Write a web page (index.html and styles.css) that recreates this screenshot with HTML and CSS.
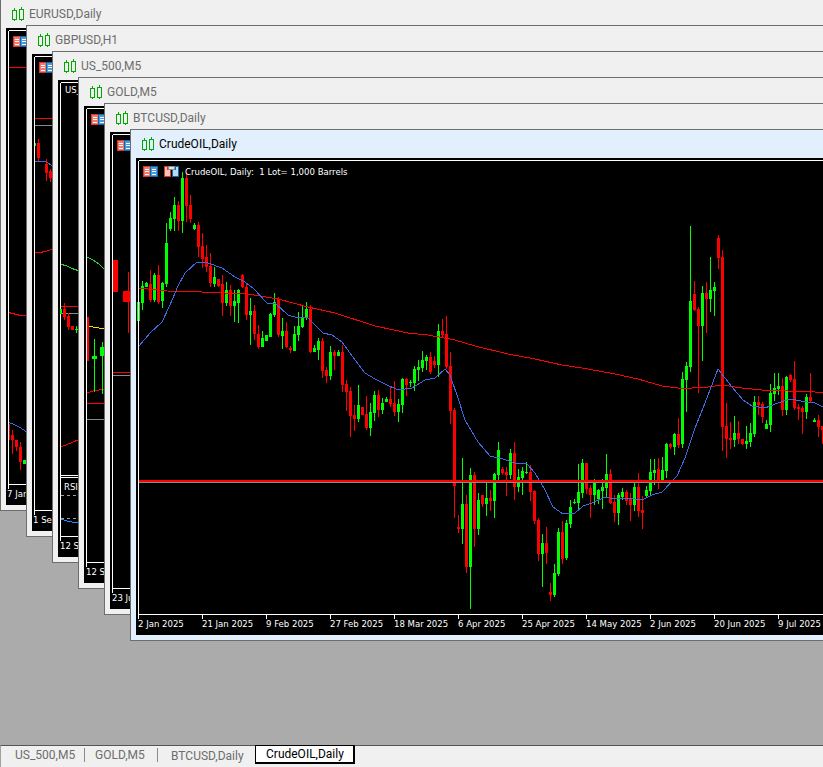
FILE: index.html
```html
<!DOCTYPE html>
<html lang="en">
<head>
<meta charset="utf-8">
<title>MetaTrader charts</title>
<link rel="stylesheet" href="styles.css">
</head>
<body>
<svg class="defs" aria-hidden="true">
  <symbol id="i-candle" viewBox="0 0 12 14">
    <path class="ic-g" d="M.5 3.5h4v9h-4zM2.5 1v2.5M2.5 12.5V14M7.5 2.5h4v10h-4zM9.5 0v2.5M9.5 12.5V14"/>
  </symbol>
  <symbol id="i-table" viewBox="0 0 15 11">
    <path class="ic-rf" d="M.5.5h7v10h-7z"/>
    <path class="ic-bf" d="M7.5.5h7v10h-7z"/>
    <path class="ic-w" d="M2 3h4M2 5.5h4M2 8h4M9 3h4M9 5.5h4M9 8h4"/>
  </symbol>
  <symbol id="i-save" viewBox="0 0 15 11">
    <path class="ic-rl" d="M.5.5h3v3h3v7h-6z"/>
    <path class="ic-bl" d="M11.5.5h3v10h-6v-7h3z"/>
    <path class="ic-gy" d="M4.5.5h6v3h-6z"/>
  </symbol>
</svg>
<main class="desk">

  <section class="win w1">
    <header class="title"><svg class="cicon"><use href="#i-candle"/></svg><span>EURUSD,Daily</span></header>
    <div class="chart">
      <svg class="plot" viewBox="6 28 830 477">
        <path class="ax" d="M8 30H900M8 30V488M8 484H900"/>
        <use href="#i-table" x="13" y="36" width="15" height="11"/>
        <path class="ln-r" d="M9 67.5H26M9 312.5l3 1 5 1 3 1 6 0"/>
        <path class="ln-b" d="M9 422.5l5 2 6 3 6 4"/>
        <path class="r" d="M9 424h1v16H9zM11 435h3v5h-3zM12 430h1v5h-1zM12 440h1v14h-1zM16 440h1v11h-1zM15 440h3v7h-3zM19 447h3v15h-3zM20 442h1v28h-1z"/>
        <path class="g" d="M23 460h3v4h-3z"/>
        <text class="lb" x="7" y="497">7 Jan 2025</text>
      </svg>
    </div>
  </section>

  <section class="win w2">
    <header class="title"><svg class="cicon"><use href="#i-candle"/></svg><span>GBPUSD,H1</span></header>
    <div class="chart">
      <svg class="plot" viewBox="32 54 830 477">
        <path class="ax" d="M34 56H900M34 56V514M34 510H900"/>
        <use href="#i-table" x="39" y="62" width="15" height="11"/>
        <path class="ln-r" d="M35 118.5H52M35 252.5l5 0 5-1 7-2"/>
        <path class="ln-gy" d="M35 125.5H52"/>
        <path class="ln-b" d="M35 161.5h10l7 4"/>
        <path class="g" d="M35 143h1v3h-1z"/>
        <path class="r" d="M37 143h3v15h-3zM38 139h1v4h-1zM38 158h1v3h-1zM45 164h3v9h-3zM46 159h1v22h-1zM49 171h3v7h-3zM50 169h1v13h-1z"/>
        <text class="lb" x="33" y="523">1 Sep 2025</text>
      </svg>
    </div>
  </section>

  <section class="win w3">
    <header class="title"><svg class="cicon"><use href="#i-candle"/></svg><span>US_500,M5</span></header>
    <div class="chart">
      <svg class="plot" viewBox="58 80 830 477">
        <path class="ax" d="M60 82H900M60 82V540M60 536H900M60 475H900M60 477H900"/>
        <text class="lb" x="65" y="93">US_500</text>
        <path class="ln-g" d="M61 264.5l5 1 6 3 6 2"/>
        <path class="ln-r" d="M61 306.5H78M61 447l17-7"/>
        <path class="ln-gy" d="M61 313.5H78"/>
        <path class="g" d="M60 309h2v5h-2zM76 326h1v7h-1zM75 329h3v1h-3z"/>
        <path class="r" d="M63 309h3v8h-3zM64 303h1v17h-1zM67 316h3v11h-3zM68 313h1v17h-1zM71 326h3v4h-3z"/>
        <text class="lb" x="64" y="490">RSI</text>
        <path class="ln-dash" d="M61 495.5H78M61 518.5H78"/>
        <path class="ln-c" d="M61 519l6 2 5 1 6 0"/>
        <text class="lb" x="60" y="549">12 Sep 2025</text>
      </svg>
    </div>
  </section>

  <section class="win w4">
    <header class="title"><svg class="cicon"><use href="#i-candle"/></svg><span>GOLD,M5</span></header>
    <div class="chart">
      <svg class="plot" viewBox="84 106 830 477">
        <path class="ax" d="M86 108H900M86 108V566M86 562H900"/>
        <use href="#i-table" x="91" y="114" width="15" height="11"/>
        <path class="ln-g" d="M87 257l6 3 6 4 5 5"/>
        <path class="ln-y" d="M87 326l6 1 6 1 5 1"/>
        <path class="ln-r" d="M87 393l6-2 6-1 5-1M87 403.5H104"/>
        <path class="ln-gy" d="M87 419.5H104"/>
        <path class="r" d="M87 317h2v44h-2z"/>
        <path class="g" d="M94 339h1v53h-1zM92 356h5v3h-5zM102 342h1v52h-1zM100 347h4v9h-4z"/>
        <text class="lb" x="86" y="575">12 Sep 2025</text>
      </svg>
    </div>
  </section>

  <section class="win w5">
    <header class="title"><svg class="cicon"><use href="#i-candle"/></svg><span>BTCUSD,Daily</span></header>
    <div class="chart">
      <svg class="plot" viewBox="110 132 830 477">
        <path class="ax" d="M112 134H900M112 134V592M112 588H900"/>
        <use href="#i-table" x="117" y="140" width="15" height="11"/>
        <path class="r" d="M113 260h5v32h-5zM123 291h7v11h-7zM128 272h1v61h-1z"/>
        <path class="ln-r" d="M113 372.5H130"/>
        <path class="ln-gy" d="M113 375.5H130"/>
        <text class="lb" x="112" y="601">23 Jun 2025</text>
      </svg>
    </div>
  </section>

  <section class="win w6">
    <header class="title"><svg class="cicon"><use href="#i-candle"/></svg><span>CrudeOIL,Daily</span></header>
    <div class="chart">
      <svg class="plot" id="main-plot" viewBox="136 158 830 477">
        <g id="candles"></g>
        <path class="ln-ask" d="M139 481H900"/>
        <path class="ln-gy" d="M139 482.5H900"/>
        <g id="axis"></g>
        <path class="ax" d="M138 160H900M138 160V618M138 614H900"/>
        <use href="#i-table" x="143" y="166" width="15" height="11"/>
        <use href="#i-save" x="164" y="166" width="15" height="11"/>
        <text class="lb" x="185" y="175">CrudeOIL, Daily:  1 Lot= 1,000 Barrels</text>
      </svg>
    </div>
  </section>
</main>

<nav class="tabs">
  <a class="tab t1"><span class="tab-t">US_500,M5</span></a>
  <a class="tab t2"><span class="tab-t">GOLD,M5</span></a>
  <a class="tab t3"><span class="tab-t">BTCUSD,Daily</span></a>
  <a class="tab active"><span class="tab-t">CrudeOIL,Daily</span></a>
</nav>
<script src="app.js"></script>
</body>
</html>
```
FILE: styles.css
```css
* { box-sizing: border-box; }
html, body { margin: 0; height: 100%; }
body {
  width: 823px;
  height: 767px;
  overflow: hidden;
  display: flex;
  flex-direction: column;
  background: #ababab;
  font-family: Roboto, "Open Sans", sans-serif;
}
.defs { position: absolute; width: 0; height: 0; }

.desk { position: relative; flex: 1; overflow: hidden; background: #ababab; }

.win {
  position: absolute;
  width: 1000px;
  height: 512px;
  border: 1px solid #6d6d6d;
  background: #f0f0f0;
  padding: 0 5px 5px;
  display: flex;
  flex-direction: column;
}
.w1 { left: 0; top: -1px; }
.w2 { left: 26px; top: 25px; }
.w3 { left: 52px; top: 51px; }
.w4 { left: 78px; top: 77px; }
.w5 { left: 104px; top: 103px; }
.w6 { left: 130px; top: 129px; background: #e2f0fd; }

.title {
  height: 28px;
  flex: none;
  display: flex;
  align-items: center;
  gap: 5px;
  padding-left: 6px;
  font-size: 12px;
  color: #6d6d6d;
  white-space: nowrap;
}
.w6 .title { color: #000; }
.cicon { width: 12px; height: 14px; flex: none; }
.ic-g { fill: none; stroke: #00a800; stroke-width: 1; shape-rendering: crispEdges; }
.ic-rf { fill: #ee7a6e; stroke: #e0352b; stroke-width: 1; shape-rendering: crispEdges; }
.ic-bf { fill: #4a9ad8; stroke: #1565b0; stroke-width: 1; shape-rendering: crispEdges; }
.ic-rl { fill: #fbc4ba; stroke: #e0352b; stroke-width: 1; shape-rendering: crispEdges; }
.ic-bl { fill: #b5dcf7; stroke: #1565b0; stroke-width: 1; shape-rendering: crispEdges; }
.ic-gy { fill: #e6e6e6; stroke: #8a8a8a; stroke-width: 1; shape-rendering: crispEdges; }
.ic-w { fill: none; stroke: #fff; stroke-width: 1; shape-rendering: crispEdges; }

.chart { flex: 1; min-height: 0; background: #000; overflow: hidden; }
.plot { display: block; width: 830px; height: 477px; }

.ax { fill: none; stroke: #fff; stroke-width: 1; shape-rendering: crispEdges; transform: translate(.5px, .5px); }
.r { fill: #f00; shape-rendering: crispEdges; }
.g { fill: #0f0; shape-rendering: crispEdges; }
.ln-r { fill: none; stroke: #f00; stroke-width: 1; shape-rendering: crispEdges; }
.ln-ask { fill: none; stroke: #f00; stroke-width: 2; shape-rendering: crispEdges; }
.ln-b { fill: none; stroke: #4169e1; stroke-width: 1; shape-rendering: crispEdges; }
.ln-c { fill: none; stroke: #1e90ff; stroke-width: 1; shape-rendering: crispEdges; }
.ln-g { fill: none; stroke: #2fd02f; stroke-width: 1; shape-rendering: crispEdges; }
.ln-y { fill: none; stroke: #ffd21e; stroke-width: 1; shape-rendering: crispEdges; }
.ln-gy { fill: none; stroke: #8a8a8a; stroke-width: 1; shape-rendering: crispEdges; }
.ln-dash { fill: none; stroke: #a0a0a0; stroke-width: 1; stroke-dasharray: 3 3; shape-rendering: crispEdges; }
.lb { fill: #fff; font-family: "DejaVu Sans Condensed", "DejaVu Sans", sans-serif; font-stretch: condensed; font-size: 9.5px; white-space: pre; }

.tabs {
  flex: none;
  height: 22px;
  display: flex;
  background: #f0f0f0;
  border-top: 1px solid #555;
  border-left: 1px solid #a0a0a0;
  font-size: 12px;
  color: #6d6d6d;
}
.tab { display: flex; align-items: center; height: 18px; margin-top: 1px; }
.tab-t { white-space: nowrap; }
.t1 { width: 84px; padding-left: 14px; border-right: 1px solid #8a8a8a; height: 14px; margin-top: 2px; }
.t2 { width: 73px; padding-left: 10px; border-right: 1px solid #8a8a8a; height: 14px; margin-top: 2px; }
.t3 { width: 97px; padding-left: 13px; }
.active {
  width: 100px;
  height: 19px;
  margin-top: -1px;
  padding-left: 10px;
  background: #fff;
  color: #000;
  border: 1px solid #000;
  border-right-width: 2px;
  border-bottom-width: 2px;
}
```
FILE: app.js
```js
// Each bar: colour, high, body top, body bottom, low (pixel rows); bar k sits at x = 138 + 4k.
var BARS = "G302,302,321,321 G281,286,303,310 G282,283,287,287 R270,284,300,302 G273,275,300,302 R265,275,302,304 G282,283,301,308 G223,243,284,287 G212,218,229,231 G197,205,219,231 R201,205,221,231 G172,178,221,233 R173,178,206,222 R195,205,219,223 G223,225,229,230 R222,225,247,257 R233,246,259,268 R245,257,267,272 R253,266,283,287 G267,277,284,287 R279,279,286,287 R275,284,303,316 G282,290,303,306 R285,290,306,316 G290,301,306,322 G289,290,303,323 R274,275,287,288 R283,287,315,320 G298,311,315,345 R305,311,334,340 R325,334,347,349 G331,338,347,347 G335,335,341,341 G313,314,337,337 G293,302,315,317 R297,299,335,337 G318,331,336,349 R322,331,347,348 R346,348,350,353 G326,334,351,351 G312,326,335,341 G306,318,327,328 G302,309,318,320 R305,309,352,353 G345,348,352,352 G338,341,350,360 R338,341,371,378 R367,370,376,383 G346,352,376,380 R350,352,356,370 G350,352,356,356 R345,352,385,392 R380,384,392,411 R387,391,416,437 R405,415,419,431 G385,405,419,422 R407,407,415,415 R396,414,428,430 G403,412,428,436 G391,395,413,421 R390,395,410,417 G398,403,410,414 G397,399,402,402 R387,399,404,407 R381,403,412,416 G399,404,412,422 G378,379,405,413 R378,379,385,396 G380,382,383,387 G366,369,383,391 G360,367,370,381 G351,360,368,372 G355,357,361,370 R352,357,372,374 R356,361,365,368 G324,331,365,377 R319,331,335,338 R316,334,367,369 R352,366,411,424 R408,410,486,518 R515,527,529,533 G458,504,529,544 R495,504,567,573 G468,475,567,609 R472,475,529,547 G493,500,529,535 R495,495,504,507 G480,498,504,516 R490,498,501,511 G473,474,501,518 G442,450,475,480 R467,469,473,475 R467,472,475,496 G449,453,475,479 R442,453,487,500 G469,477,487,492 G467,471,478,495 G462,472,473,474 R465,472,492,501 R490,491,521,524 R518,520,554,561 G534,543,554,587 R527,543,553,564 R583,592,595,601 G564,573,595,597 G528,532,574,576 R521,532,559,564 G520,523,558,560 G500,507,524,528 G499,502,503,504 G464,492,503,509 G459,463,493,498 R463,463,489,494 R485,488,495,518 G479,483,495,505 G489,490,499,504 G479,487,491,509 G454,474,488,498 R469,474,503,504 R495,502,513,522 G493,495,513,525 G488,492,497,500 R490,492,501,505 R493,499,505,521 G482,487,505,511 R473,487,511,517 R496,510,513,529 G486,490,496,497 G459,472,491,496 G459,470,473,485 R458,469,480,489 G457,470,481,483 G443,444,471,478 R443,444,447,449 G433,434,447,455 R418,434,445,448 G372,379,444,448 G362,366,380,412 G226,301,367,372 R281,294,310,311 R307,309,326,393 G286,293,326,361 R282,293,299,333 G257,290,299,312 G282,287,291,316 R235,238,258,269 R250,257,427,451 R403,426,439,458 R422,438,440,449 G416,433,440,447 R421,433,439,444 R439,439,444,445 G426,441,444,449 G423,433,442,447 G396,402,434,437 R396,402,405,415 R402,404,417,423 G420,424,429,429 G384,393,425,432 G373,388,394,401 G373,386,389,395 R378,386,410,416 G376,377,410,415 R374,375,380,382 R361,379,408,410 R404,407,409,420 R406,408,412,434 G394,397,412,419 R373,397,401,402 G418,420,422,422 R415,420,427,437 R426,426,430,444";

var BLUE = "139,346 150,333 162,322 170,305 178,286 185,273 197,262 208,263 222,268 235,277 245,282 253,288 267,303 275,303 288,315 298,318 307,317 313,323 323,333 332,335 342,342 355,360 365,373 375,379 385,384 398,390 412,388 425,380 435,378 445,369 450,375 458,398 465,420 478,442 490,456 503,459 515,463 527,464 535,473 545,490 553,507 563,514 575,513 583,506 592,503 605,497 615,499 628,498 642,500 652,495 662,492 677,476 685,458 695,428 705,403 718,369 732,387 743,400 752,406 765,408 778,403 790,399 807,402 815,403 823,407";

var RED = "139,288 167,291 202,292 248,294 278,299 308,307 335,313 375,326 408,333 428,335 455,340 475,346 508,354 535,359 562,365 588,369 615,374 638,379 662,386 678,388 692,388 708,387 722,385 742,388 762,390 788,391 815,392 823,393";

var DATES = ["2 Jan 2025", "21 Jan 2025", "9 Feb 2025", "27 Feb 2025", "18 Mar 2025", "6 Apr 2025",
             "25 Apr 2025", "14 May 2025", "2 Jun 2025", "20 Jun 2025", "9 Jul 2025"];

var NS = "http://www.w3.org/2000/svg";

function el(name, attrs, parent) {
  var n = document.createElementNS(NS, name);
  for (var k in attrs) n.setAttribute(k, attrs[k]);
  parent.appendChild(n);
  return n;
}

function drawCandles(root) {
  var red = "", green = "";
  BARS.split(" ").forEach(function (bar, k) {
    var v = bar.slice(1).split(",").map(Number);
    var x = 138 + 4 * k;
    var d = "M" + x + " " + v[0] + "h1V" + v[3] + "h-1z" +
            "M" + (x - 1) + " " + v[1] + "h3V" + Math.max(v[2], v[1] + 1) + "h-3z";
    if (bar[0] === "R") red += d; else green += d;
  });
  el("path", { "class": "g", d: green }, root);
  el("path", { "class": "r", d: red }, root);
  el("polyline", { "class": "ln-r", points: RED, fill: "none" }, root);
  el("polyline", { "class": "ln-b", points: BLUE, fill: "none" }, root);
}

function drawAxis(root) {
  var ticks = "";
  DATES.forEach(function (label, i) {
    var x = 138 + 64 * i;
    ticks += "M" + x + " 614v4";
    el("text", { "class": "lb", x: x, y: 627 }, root).textContent = label;
  });
  el("path", { "class": "ax", d: ticks }, root);
}

drawCandles(document.getElementById("candles"));
drawAxis(document.getElementById("axis"));
```
